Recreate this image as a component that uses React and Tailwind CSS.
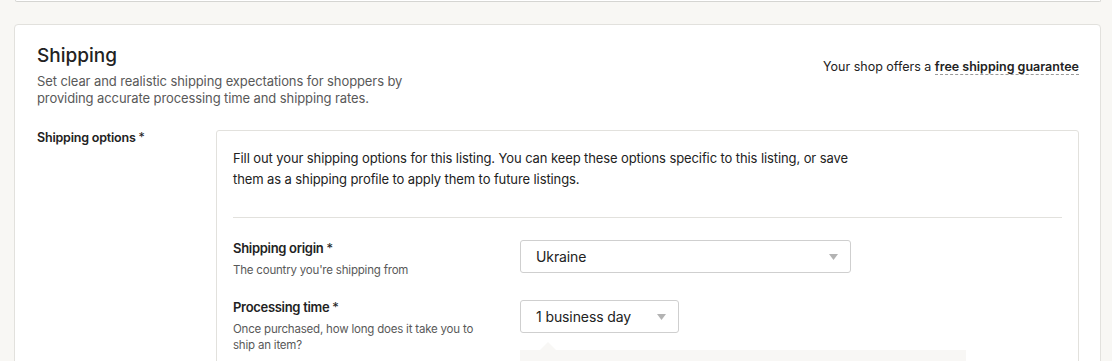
function Caret() {
  return (
    <svg className="w-[9px] h-[6px]" viewBox="0 0 9 6" fill="#b3b3b3">
      <path d="M0 0h9L4.5 6z" />
    </svg>
  );
}

function SelectBox({ value, width }) {
  return (
    <div
      className={`${width} h-[33px] flex items-center justify-between pl-[15px] pr-[12px] border border-[#cfcfcf] rounded-[3px] bg-white text-[14px] tracking-[-0.1px] text-[#222]`}
    >
      <span>{value}</span>
      <Caret />
    </div>
  );
}

function FieldRow({ label, hint, children, className = '' }) {
  return (
    <div className={`flex items-start ${className}`}>
      <div className="w-[287px] shrink-0">
        <div className="text-[13px] leading-[18px] font-semibold tracking-[-0.3px] text-[#222]">
          {label} <span className="font-normal">*</span>
        </div>
        <div className="mt-[5px] max-w-[250px] text-[11.5px] leading-[16px] tracking-[-0.2px] text-[#595959]">{hint}</div>
      </div>
      <div className="flex-1">{children}</div>
    </div>
  );
}

export default function App() {
  return (
    <div
      className="w-full h-[361px] overflow-hidden bg-[#f8f7f4]"
      style={{ fontFamily: 'Inter, "Noto Sans", sans-serif' }}
    >
      {/* bottom edge of the previous card */}
      <div className="ml-[15px] mr-[11px] h-[2px] border border-t-0 border-[#d5d5d2] rounded-b-[3px] bg-white" />

      {/* Shipping card */}
      <div className="mt-[22px] ml-[14px] mr-[11px] bg-white border border-[#e2e1dd] rounded-[4px] pl-[22px] pr-[21px] pt-[19px] pb-10">
        <div className="flex justify-between">
          <div>
            <h2 className="text-[19px] leading-[24px] font-medium text-[#222]">Shipping</h2>
            <p className="mt-[5px] w-[380px] text-[13px] leading-[17px] tracking-[-0.1px] text-[#595959]">
              Set clear and realistic shipping expectations for shoppers by providing accurate processing time and shipping rates.
            </p>
          </div>
          <div className="pt-[13px] text-[12.5px] leading-[20px] text-[#222]">
            Your shop offers a{' '}
            <span className="font-semibold border-b border-dashed border-[#9a9a9a]">free shipping guarantee</span>
          </div>
        </div>

        <div className="mt-[23px] flex items-start">
          <div className="w-[179px] shrink-0 text-[12.5px] leading-[16px] font-semibold tracking-[-0.2px] text-[#222]">
            Shipping options <span className="font-normal">*</span>
          </div>

          <div className="flex-1 border border-[#e2e1dd] rounded-t-[3px] px-4 pt-[17px] pb-10">
            <p className="w-[630px] text-[13px] leading-[21px] tracking-[-0.1px] text-[#222]">
              Fill out your shipping options for this listing. You can keep these options specific to this listing, or save them as a shipping profile to apply them to future listings.
            </p>

            <div className="mt-[27px] border-t border-[#e2e1dd]" />

            <FieldRow className="mt-[21px]" label="Shipping origin" hint="The country you're shipping from">
              <div className="mt-[1px]">
                <SelectBox value="Ukraine" width="w-[331px]" />
              </div>
            </FieldRow>

            <FieldRow
              className="mt-[20px]"
              label="Processing time"
              hint="Once purchased, how long does it take you to ship an item?"
            >
              <div className="mt-[2px]">
                <SelectBox value="1 business day" width="w-[159px]" />
                {/* popover with notch */}
                <div className="relative mt-[17px] w-[446px] h-[60px] bg-[#f8f7f5]">
                  <div className="absolute -top-[8px] left-[20px] w-0 h-0 border-x-[8px] border-x-transparent border-b-[8px] border-b-[#f8f7f5]" />
                </div>
              </div>
            </FieldRow>
          </div>
        </div>
      </div>
    </div>
  );
}
